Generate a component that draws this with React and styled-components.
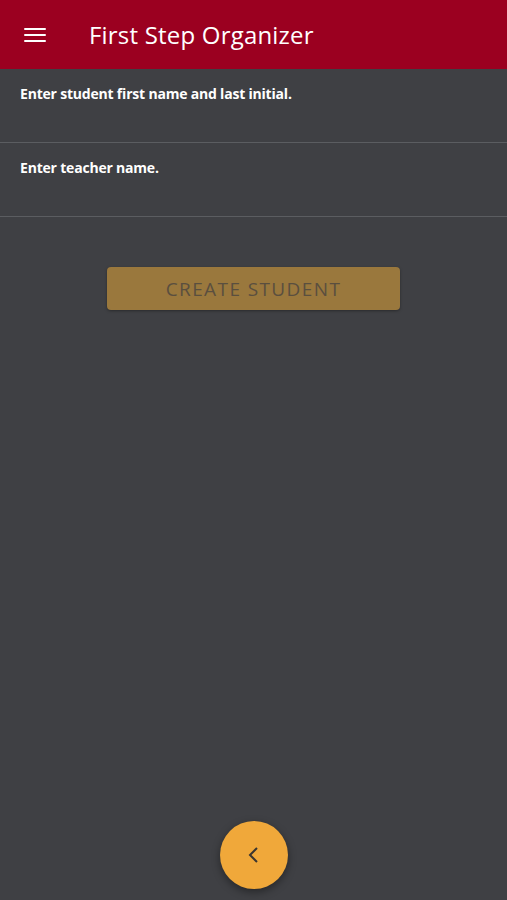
import React from "react";
import styled, { createGlobalStyle } from "styled-components";

const GlobalStyle = createGlobalStyle`
  html, body {
    margin: 0;
    padding: 0;
    background: #3f4044;
    font-family: "Open Sans", "Noto Sans", sans-serif;
  }
`;

const Page = styled.div`
  width: 507px;
  height: 900px;
  background: #3f4044;
  display: flex;
  flex-direction: column;
  position: relative;
  overflow: hidden;
`;

const Header = styled.header`
  height: 69px;
  background: #9b0020;
  display: flex;
  align-items: center;
  padding-left: 24px;
  gap: 43px;
  box-sizing: border-box;
`;

const MenuBtn = styled.span`
  display: flex;
  flex-direction: column;
  gap: 4px;
  width: 22px;
  span {
    height: 2px;
    background: #fff;
    border-radius: 1px;
  }
`;

const Title = styled.h1`
  margin: 0;
  color: #fff;
  font-size: 24px;
  font-weight: 500;
  letter-spacing: 0.2px;
`;

const Field = styled.div`
  height: 74px;
  border-bottom: 1px solid #5b5d61;
  padding: 15px 20px 0;
  box-sizing: border-box;
  color: #fff;
  font-size: 14px;
  font-weight: 700;
  letter-spacing: -0.2px;
`;

const Actions = styled.div`
  display: flex;
  justify-content: center;
  padding-top: 50px;
`;

const CreateBtn = styled.button`
  width: 293px;
  height: 43px;
  background: #9a783d;
  border: none;
  border-radius: 4px;
  color: #5a4f3f;
  font-family: "Open Sans", sans-serif;
  font-size: 19px;
  letter-spacing: 1.4px;
  box-shadow: 0 1px 3px rgba(0, 0, 0, 0.35);
`;

const Fab = styled.button`
  position: absolute;
  left: 220px;
  top: 821px;
  width: 68px;
  height: 68px;
  border-radius: 50%;
  border: none;
  background: #f0a83a;
  display: flex;
  align-items: center;
  justify-content: center;
  box-shadow: 0 3px 8px rgba(0, 0, 0, 0.4);
`;

export default function App() {
  return (
    <Page>
      <GlobalStyle />
      <Header>
        <MenuBtn>
          <span />
          <span />
          <span />
        </MenuBtn>
        <Title>First Step Organizer</Title>
      </Header>
      <Field>Enter student first name and last initial.</Field>
      <Field>Enter teacher name.</Field>
      <Actions>
        <CreateBtn>CREATE STUDENT</CreateBtn>
      </Actions>
      <Fab>
        <svg width="24" height="24" viewBox="0 0 24 24">
          <path d="M15 5 L8 12 L15 19" fill="none" stroke="#3a3530" strokeWidth="2" />
        </svg>
      </Fab>
    </Page>
  );
}
